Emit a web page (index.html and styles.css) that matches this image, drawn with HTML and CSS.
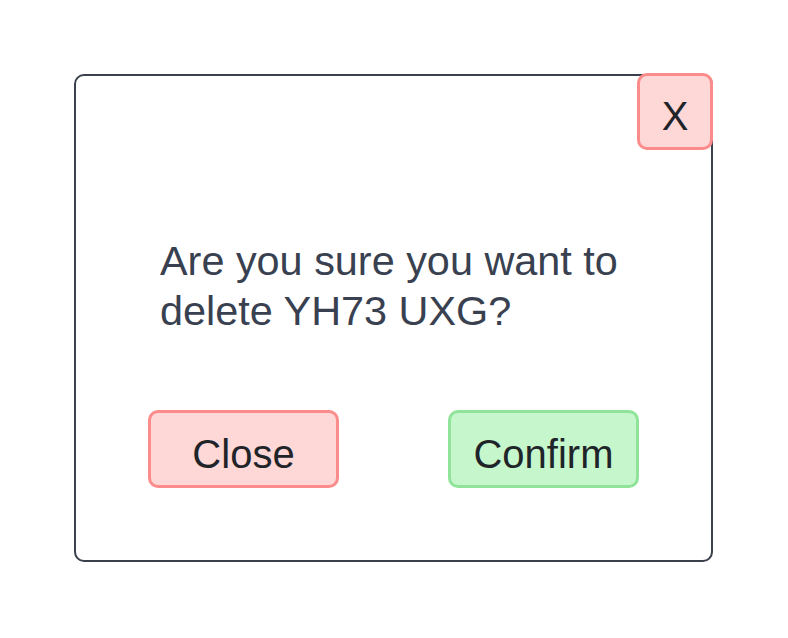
FILE: index.html
```html
<!DOCTYPE html>
<html lang="en">
<head>
<meta charset="utf-8">
<title>Delete confirmation</title>
<link rel="stylesheet" href="styles.css">
</head>
<body>
<div class="dialog">
  <button class="btn btn-x">X</button>
  <p class="message">Are you sure you want to<br>delete YH73 UXG?</p>
  <div class="actions">
    <button class="btn btn-close">Close</button>
    <button class="btn btn-confirm">Confirm</button>
  </div>
</div>
</body>
</html>
```
FILE: styles.css
```css
html, body {
  margin: 0;
  padding: 0;
  background: #ffffff;
}
body {
  padding: 74px 0 0 74px;
  font-family: "Liberation Sans", Arial, sans-serif;
}
.dialog {
  position: relative;
  box-sizing: border-box;
  width: 639px;
  height: 488px;
  border: 2px solid #3a404c;
  border-radius: 10px;
  padding: 160px 0 71px 0;
  display: flex;
  flex-direction: column;
}
.message {
  margin: 0;
  padding-left: 84px;
  font-size: 41.4px;
  line-height: 50px;
  color: #394150;
}
.actions {
  margin-top: 74px;
  padding: 0 72px 0 72px;
  display: flex;
  justify-content: space-between;
}
.btn {
  box-sizing: border-box;
  font-family: "Liberation Sans", Arial, sans-serif;
  font-size: 40px;
  color: #1f2429;
  border-radius: 10px;
  border: 3px solid;
  margin: 0;
  line-height: normal;
  display: flex;
  align-items: center;
  justify-content: center;
}
.btn-close, .btn-confirm {
  width: 191px;
  height: 78px;
  padding: 10px 0 0 0;
}
.btn-close, .btn-x {
  background: #fed7d7;
  border-color: #fc8b8b;
}
.btn-confirm {
  background: #c6f6cc;
  border-color: #8fe49a;
}
.btn-x {
  position: absolute;
  top: -3px;
  right: -2px;
  width: 76px;
  height: 77px;
  padding: 9px 0 0 0;
}
```
